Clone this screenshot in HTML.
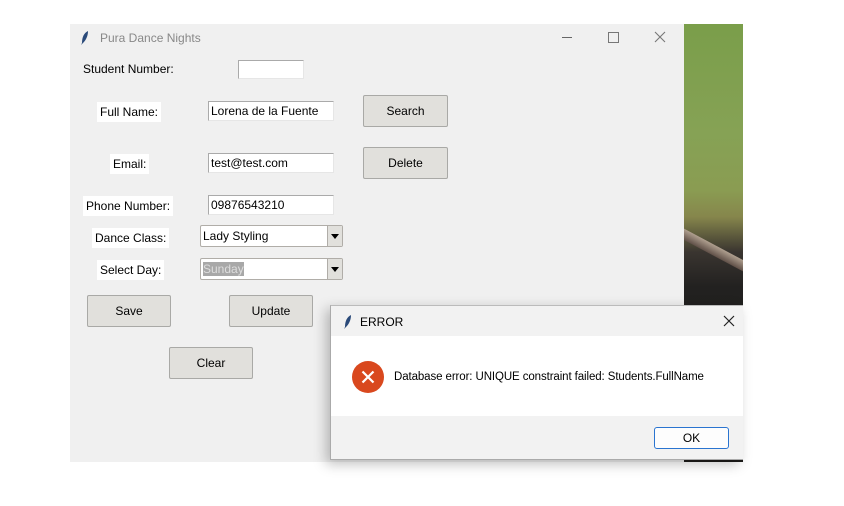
<!DOCTYPE html>
<html><head><style>
body{margin:0;width:844px;height:506px;background:#fff;position:relative;overflow:hidden;font-family:"Liberation Sans",sans-serif;font-size:12px;color:#000}
.a{position:absolute}
.win{left:70px;top:24px;width:614px;height:438px;background:#f0f0f0}
.lbl{background:#fff;padding:2px 3px;line-height:16px}
.ent{background:#fff;border:1px solid #aaa;border-right-color:#e6e6e6;border-bottom-color:#e6e6e6;height:18px;line-height:18px;padding-left:2px;box-sizing:border-box}
.btn{background:#e1e0dc;border:1px solid #a9a9a6;border-radius:2px;box-sizing:border-box;text-align:center}
.cb{background:#fff;border:1px solid #b0ada8;border-radius:2px;height:22px;box-sizing:border-box;line-height:20px;padding-left:2px}
.cb .ar{position:absolute;right:0;top:0;width:14px;height:20px;background:#e1e0dc;border-left:1px solid #b0ada8}
.cb .ar:after{content:"";position:absolute;left:3px;top:8px;border-left:4px solid transparent;border-right:4px solid transparent;border-top:5px solid #000}
</style></head><body>
<div class="a" style="left:684px;top:24px;width:59px;height:438px;overflow:hidden;background:linear-gradient(180deg,#7a9e4a 0%,#86a255 25%,#8a9c52 38%,#86864c 44%,#3a3530 52%,#222120 60%,#1d1c1a 100%)">
 <div class="a" style="left:-10px;top:200px;width:90px;height:10px;background:linear-gradient(180deg,#b0a090,#605048);transform:rotate(28deg);transform-origin:left"></div>
</div>
<div class="a win">
 <svg class="a" style="left:10px;top:7px" width="10" height="14" viewBox="0 0 10 14"><path d="M8 0C4 2 2 6 2 12L1 14 3 12C6 9 8 5 8 0Z" fill="#2a4a7a"/></svg>
 <div class="a" style="left:30px;top:7px;color:#888;font-size:12px">Pura Dance Nights</div>
 <div class="a" style="left:492px;top:13px;width:10px;height:1px;background:#666"></div>
 <div class="a" style="left:538px;top:8px;width:9px;height:9px;border:1px solid #777"></div>
 <svg class="a" style="left:584px;top:7px" width="12" height="12"><path d="M1 1L11 11M11 1L1 11" stroke="#777" stroke-width="1.1"/></svg>

 <div class="a" style="left:13px;top:38px">Student Number:</div>
 <div class="a ent" style="left:168px;top:36px;width:66px;height:19px"></div>
 <div class="a lbl" style="left:27px;top:78px">Full Name:</div>
 <div class="a ent" style="left:138px;top:77px;width:126px;height:20px">Lorena de la Fuente</div>
 <div class="a btn" style="left:293px;top:71px;width:85px;height:32px;line-height:30px">Search</div>
 <div class="a lbl" style="left:40px;top:130px">Email:</div>
 <div class="a ent" style="left:138px;top:129px;width:126px;height:20px">test@test.com</div>
 <div class="a btn" style="left:293px;top:123px;width:85px;height:32px;line-height:30px">Delete</div>
 <div class="a lbl" style="left:13px;top:172px">Phone Number:</div>
 <div class="a ent" style="left:138px;top:171px;width:126px;height:20px">09876543210</div>
 <div class="a lbl" style="left:22px;top:204px">Dance Class:</div>
 <div class="a cb" style="left:130px;top:201px;width:143px">Lady Styling<div class="ar"></div></div>
 <div class="a lbl" style="left:27px;top:236px">Select Day:</div>
 <div class="a cb" style="left:130px;top:234px;width:143px"><span style="background:#a8a8a8;color:#ddd">Sunday</span><div class="ar"></div></div>
 <div class="a btn" style="left:17px;top:271px;width:84px;height:32px;line-height:30px">Save</div>
 <div class="a btn" style="left:159px;top:271px;width:84px;height:32px;line-height:30px">Update</div>
 <div class="a btn" style="left:99px;top:323px;width:84px;height:32px;line-height:30px">Clear</div>
</div>
<div class="a" style="left:330px;top:305px;width:413px;height:155px;box-sizing:border-box;box-shadow:-4px 4px 12px rgba(0,0,0,.25);border-left:1px solid #aaa;border-top:1px solid #bbb;border-bottom:1px solid #aaa;background:#f2f2f2">
 <svg class="a" style="left:12px;top:9px" width="10" height="14" viewBox="0 0 10 14"><path d="M8 0C4 2 2 6 2 12L1 14 3 12C6 9 8 5 8 0Z" fill="#2a4a7a"/></svg>
 <div class="a" style="left:29px;top:9px">ERROR</div>
 <svg class="a" style="left:392px;top:9px" width="12" height="12"><path d="M1 1L11 11M11 1L1 11" stroke="#222" stroke-width="1.2"/></svg>
 <div class="a" style="left:0;top:30px;width:412px;height:80px;background:#fff">
  <svg class="a" style="left:20px;top:24px" width="34" height="34"><circle cx="17" cy="17" r="16" fill="#d9481e"/><path d="M11.5 11.5L22.5 22.5M22.5 11.5L11.5 22.5" stroke="#fff" stroke-width="2.2"/></svg>
  <div class="a" style="left:63px;top:35px;font-size:11.5px;letter-spacing:-0.1px">Database error: UNIQUE constraint failed: Students.FullName</div>
 </div>
 <div class="a" style="left:323px;top:121px;width:73px;height:20px;border:1px solid #2a74d0;border-radius:3px;background:#fdfdfd;text-align:center;line-height:20px">OK</div>
</div>
</body></html>
